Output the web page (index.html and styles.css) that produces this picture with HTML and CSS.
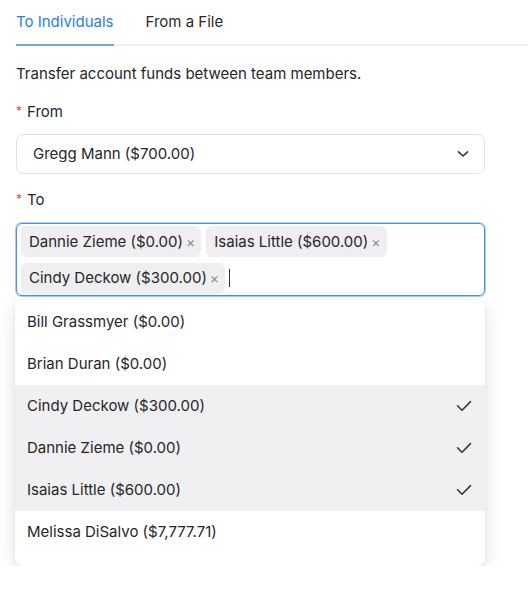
FILE: index.html
```html
<!DOCTYPE html>
<html>
<head>
<meta charset="utf-8">
<link rel="stylesheet" href="styles.css">
</head>
<body>
<div class="page">
  <div class="tabs">
    <div class="tab active">To Individuals</div>
    <div class="tab">From a File</div>
  </div>
  <div class="form">
    <p class="desc">Transfer account funds between team members.</p>
    <div class="label"><span class="req">*</span>From</div>
    <div class="select">
      <span>Gregg Mann ($700.00)</span>
      <svg class="chev" width="12" height="8" viewBox="0 0 12 8"><path d="M1.5 1.8 L6 6 L10.5 1.8" fill="none" stroke="#333" stroke-width="1.6" stroke-linecap="round" stroke-linejoin="round"/></svg>
    </div>
    <div class="label label-to"><span class="req">*</span>To</div>
    <div class="multi">
      <span class="chip">Dannie Zieme ($0.00)<span class="x">×</span></span>
      <span class="chip">Isaias Little ($600.00)<span class="x">×</span></span>
      <span class="chip">Cindy Deckow ($300.00)<span class="x">×</span></span>
      <span class="caret"></span>
    </div>
    <div class="dropdown">
      <div class="opt">Bill Grassmyer ($0.00)</div>
      <div class="opt">Brian Duran ($0.00)</div>
      <div class="opt sel">Cindy Deckow ($300.00)<svg class="check" width="16" height="12" viewBox="0 0 16 12"><path d="M1.5 5.8 L6 10.2 L14.5 1.6" fill="none" stroke="#333" stroke-width="1.5" stroke-linecap="round" stroke-linejoin="round"/></svg></div>
      <div class="opt sel">Dannie Zieme ($0.00)<svg class="check" width="16" height="12" viewBox="0 0 16 12"><path d="M1.5 5.8 L6 10.2 L14.5 1.6" fill="none" stroke="#333" stroke-width="1.5" stroke-linecap="round" stroke-linejoin="round"/></svg></div>
      <div class="opt sel">Isaias Little ($600.00)<svg class="check" width="16" height="12" viewBox="0 0 16 12"><path d="M1.5 5.8 L6 10.2 L14.5 1.6" fill="none" stroke="#333" stroke-width="1.5" stroke-linecap="round" stroke-linejoin="round"/></svg></div>
      <div class="opt">Melissa DiSalvo ($7,777.71)</div>
    </div>
  </div>
</div>
</body>
</html>
```
FILE: styles.css
```css
* { box-sizing: border-box; }
html, body { margin: 0; padding: 0; background: #fff; }
body {
  font-family: Inter, "Noto Sans", sans-serif;
  font-size: 15px;
  line-height: 20px;
  color: #262626;
}
.page { padding-left: 16px; }
.tabs {
  display: flex;
  gap: 32px;
  border-bottom: 2px solid #f0f0f0;
}
.tab {
  padding: 12px 0 12px;
  margin-bottom: -2px;
  border-bottom: 2px solid transparent;
  color: #2a2a2a;
}
.tab.active {
  color: #2a7ff0;
  border-bottom-color: #6aa7f2;
}
.form { width: 469px; }
.desc { margin: 18px 0 0; }
.label { margin-top: 18px; display: flex; align-items: center; }
.label-to { margin-top: 16px; }
.req { color: #e5483f; font-size: 12px; margin-right: 5px; position: relative; top: -1px; }
.select {
  margin-top: 12px;
  height: 40px;
  border: 1px solid #e3e3e6;
  border-radius: 7px;
  display: flex;
  align-items: center;
  justify-content: space-between;
  padding: 0 15px 0 16px;
}
.multi {
  margin-top: 13px;
  border: 1px solid #4a8fe8;
  box-shadow: 0 0 0 1px rgba(74,143,232,0.45);
  border-radius: 6px;
  padding: 2px 4px 1px;
  display: flex;
  flex-wrap: wrap;
  align-items: center;
  gap: 5px 5px;
  min-height: 73px;
}
.chip {
  display: inline-flex;
  align-items: center;
  height: 31px;
  padding: 0 6px 0 8px;
  background: #efeff1;
  border-radius: 6px;
  white-space: nowrap;
}
.x { color: #8a8a8e; font-size: 14px; margin-left: 3px; }
.caret { width: 1px; height: 18px; background: #333; margin-left: -1px; }
.dropdown {
  margin: 4px 0 0 -1px;
  width: 470px;
  background: #fff;
  border-radius: 8px;
  box-shadow: 0 6px 20px rgba(0,0,0,0.12), 0 1px 4px rgba(0,0,0,0.05);
  padding: 1px 0 13px;
  overflow: hidden;
}
.opt {
  height: 42px;
  display: flex;
  align-items: center;
  justify-content: space-between;
  padding: 0 13px 0 12px;
}
.opt.sel { background: #f0f0f2; }
```
